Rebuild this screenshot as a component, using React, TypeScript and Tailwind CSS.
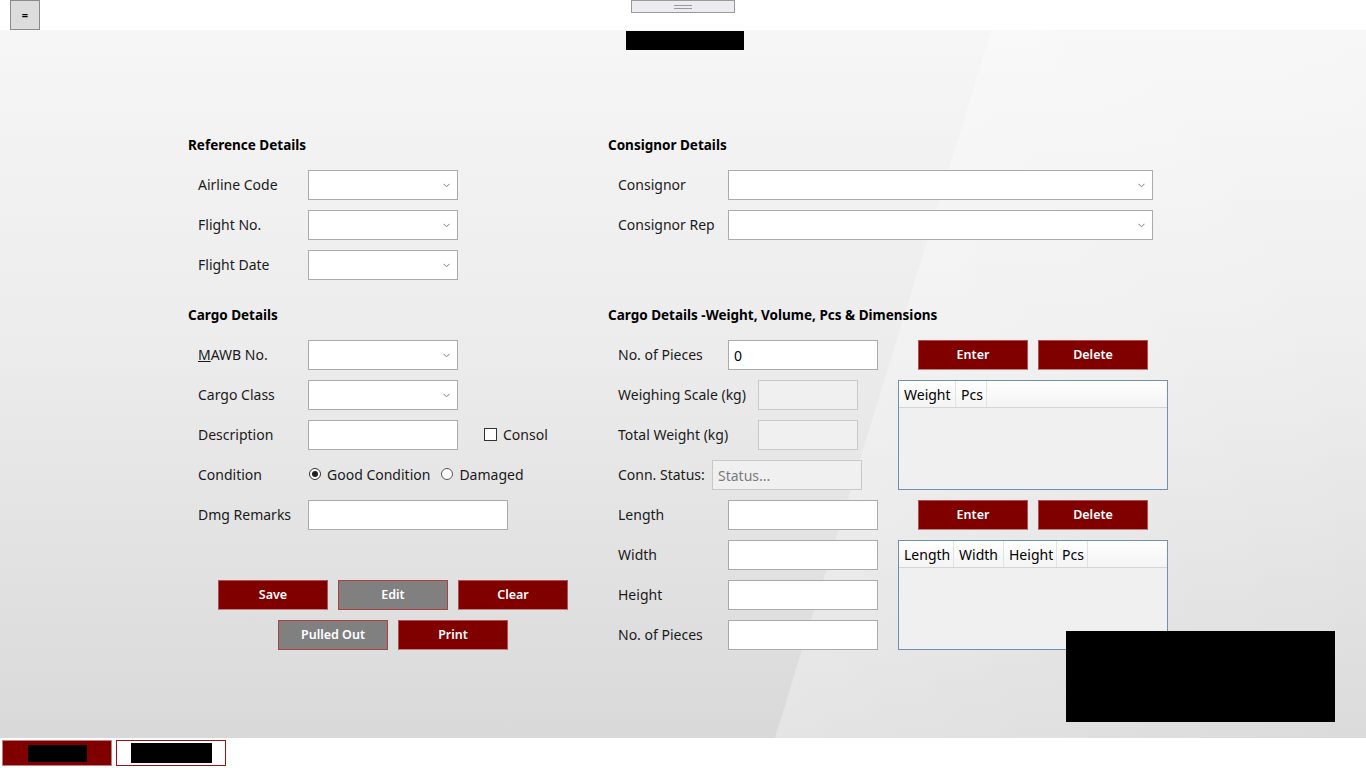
import React from "react";

const font = { fontFamily: '"Noto Sans", "Open Sans", sans-serif' };

function Chevron() {
  return (
    <svg width="7" height="5" viewBox="0 0 7 5" className="absolute right-[7px] top-[12px]">
      <path d="M0.5 0.8 L3.5 3.8 L6.5 0.8" fill="none" stroke="#7a7a7a" strokeWidth="1" />
    </svg>
  );
}

function Select({ w }: { w: string }) {
  return <div className={`relative h-[30px] ${w} bg-white border border-[#ababab]`}><Chevron /></div>;
}

function Input({ w, children, disabled }: { w: string; children?: React.ReactNode; disabled?: boolean }) {
  return (
    <div className={`h-[30px] ${w} ${disabled ? "bg-[#f0f0f0] border-[#c8c8c8]" : "bg-white border-[#ababab]"} border flex items-center px-[5px] text-[14px] text-black`}>
      {children}
    </div>
  );
}

function Row({ label, children, lw = "w-[120px]" }: { label: React.ReactNode; children: React.ReactNode; lw?: string }) {
  return (
    <div className="flex items-center h-[30px]">
      <div className={`${lw} pl-[10px] text-[14px] leading-[20px] pb-[1px] text-[#1a1a1a] shrink-0`}>{label}</div>
      {children}
    </div>
  );
}

function Heading({ children }: { children: React.ReactNode }) {
  return <div className="h-[30px] flex items-center text-[13.5px] font-bold text-black">{children}</div>;
}

function RedBtn({ children, gray }: { children: React.ReactNode; gray?: boolean }) {
  return (
    <div
      className={`w-[110px] h-[30px] flex items-center justify-center text-[12.5px] font-semibold text-white border ${
        gray ? "bg-[#808080] border-[#b04040]" : "bg-[#800000] border-[#b05050] border-b-[#c08080]"
      }`}
    >
      {children}
    </div>
  );
}

function Grid({ cols }: { cols: { n: string; w: string }[] }) {
  return (
    <div className="w-[270px] h-[110px] border border-[#7090b0] bg-[#f0f0f0] flex flex-col">
      <div className="h-[27px] flex bg-[linear-gradient(#ffffff,#f4f4f4)] border-b border-[#d5d5d5]">
        {cols.map((c) => (
          <div key={c.n} className={`${c.w} border-r border-[#e2e2e2] flex items-center pl-[5px] text-[14px] text-black`}>
            {c.n}
          </div>
        ))}
      </div>
    </div>
  );
}

export default function App() {
  return (
    <div className="w-[1366px] h-[768px] flex flex-col bg-white overflow-hidden" style={font}>
      {/* top bar */}
      <div className="h-[30px] flex items-start relative shrink-0">
        <div className="ml-[10px] w-[30px] h-[30px] bg-[#dcdcdc] border border-[#8a8a8a] flex items-center justify-center text-[11px] font-bold text-black">=</div>
        <div className="absolute left-[631px] top-0 w-[104px] h-[13px] bg-[#ececf0] border border-[#9a9a9a] flex flex-col items-center justify-center gap-[2px]">
          <div className="w-[18px] h-[1px] bg-[#999]" />
          <div className="w-[18px] h-[1px] bg-[#999]" />
        </div>
      </div>

      {/* main */}
      <div className="relative h-[708px] shrink-0 bg-[linear-gradient(180deg,#f6f6f6_0%,#ececec_45%,#d9d9d9_100%)]">
        <div className="absolute inset-0 bg-[linear-gradient(107deg,transparent_0%,transparent_62.6%,rgba(255,255,255,0.3)_62.7%,rgba(255,255,255,0.05)_100%)]" />
        <div className="absolute left-[626px] top-[1px] w-[118px] h-[19px] bg-black" />

        <div className="relative flex pl-[188px] pt-[100px]">
          {/* left column */}
          <div className="w-[420px] flex flex-col">
            <Heading>Reference Details</Heading>
            <div className="flex flex-col gap-[10px] mt-[10px]">
              <Row label="Airline Code"><Select w="w-[150px]" /></Row>
              <Row label="Flight No."><Select w="w-[150px]" /></Row>
              <Row label="Flight Date"><Select w="w-[150px]" /></Row>
            </div>
            <div className="mt-[20px]"><Heading>Cargo Details</Heading></div>
            <div className="flex flex-col gap-[10px] mt-[10px]">
              <Row label={<span><span className="underline">M</span>AWB No.</span>}><Select w="w-[150px]" /></Row>
              <Row label="Cargo Class"><Select w="w-[150px]" /></Row>
              <Row label="Description">
                <Input w="w-[150px]" />
                <div className="ml-[26px] flex items-center gap-[6px] text-[14px] text-[#1a1a1a] pb-[2px]">
                  <div className="w-[13px] h-[13px] border border-[#333] bg-white" />
                  <span>Consol</span>
                </div>
              </Row>
              <Row label="Condition">
                <div className="flex items-center text-[14px] text-[#1a1a1a] pb-[2px]">
                  <div className="ml-[1px] w-[12px] h-[12px] rounded-full border border-[#333] bg-white flex items-center justify-center">
                    <div className="w-[6px] h-[6px] rounded-full bg-[#222]" />
                  </div>
                  <span className="ml-[6px]">Good Condition</span>
                  <div className="ml-[11px] w-[12px] h-[12px] rounded-full border border-[#555] bg-white" />
                  <span className="ml-[6px]">Damaged</span>
                </div>
              </Row>
              <Row label="Dmg Remarks"><Input w="w-[200px]" /></Row>
            </div>
            <div className="flex flex-col items-start mt-[50px] gap-[10px]">
              <div className="flex gap-[10px] ml-[30px]">
                <RedBtn>Save</RedBtn>
                <RedBtn gray>Edit</RedBtn>
                <RedBtn>Clear</RedBtn>
              </div>
              <div className="flex gap-[10px] ml-[90px]">
                <RedBtn gray>Pulled Out</RedBtn>
                <RedBtn>Print</RedBtn>
              </div>
            </div>
          </div>

          {/* right column */}
          <div className="flex flex-col">
            <Heading>Consignor Details</Heading>
            <div className="flex flex-col gap-[10px] mt-[10px]">
              <Row label="Consignor"><Select w="w-[425px]" /></Row>
              <Row label="Consignor Rep"><Select w="w-[425px]" /></Row>
            </div>
            <div className="mt-[60px]"><Heading>Cargo Details -Weight, Volume, Pcs &amp; Dimensions</Heading></div>
            <div className="flex mt-[10px]">
              <div className="w-[290px] flex flex-col gap-[10px]">
                <Row label="No. of Pieces"><Input w="w-[150px]">0</Input></Row>
                <Row label="Weighing Scale (kg)" lw="w-[150px]"><Input w="w-[100px]" disabled /></Row>
                <Row label="Total Weight (kg)" lw="w-[150px]"><Input w="w-[100px]" disabled /></Row>
                <Row label="Conn. Status:" lw="w-[104px]">
                  <Input w="w-[150px]" disabled><span className="text-[#7a7a7a]">Status...</span></Input>
                </Row>
                <Row label="Length"><Input w="w-[150px]" /></Row>
                <Row label="Width"><Input w="w-[150px]" /></Row>
                <Row label="Height"><Input w="w-[150px]" /></Row>
                <Row label="No. of Pieces"><Input w="w-[150px]" /></Row>
              </div>
              <div className="flex flex-col gap-[10px]">
                <div className="flex gap-[10px] ml-[20px]">
                  <RedBtn>Enter</RedBtn>
                  <RedBtn>Delete</RedBtn>
                </div>
                <Grid cols={[{ n: "Weight", w: "w-[57px]" }, { n: "Pcs", w: "w-[31px]" }]} />
                <div className="flex gap-[10px] ml-[20px]">
                  <RedBtn>Enter</RedBtn>
                  <RedBtn>Delete</RedBtn>
                </div>
                <Grid
                  cols={[
                    { n: "Length", w: "w-[55px]" },
                    { n: "Width", w: "w-[50px]" },
                    { n: "Height", w: "w-[53px]" },
                    { n: "Pcs", w: "w-[31px]" },
                  ]}
                />
              </div>
            </div>
          </div>
        </div>
        <div className="absolute left-[1066px] top-[601px] w-[269px] h-[91px] bg-black" />
      </div>

      {/* bottom bar */}
      <div className="h-[30px] flex items-center gap-[4px] pl-[2px] shrink-0 bg-white">
        <div className="w-[110px] h-[26px] bg-[#800000] border border-[#c08080] flex items-center justify-center">
          <div className="w-[59px] h-[17px] bg-black" />
        </div>
        <div className="w-[110px] h-[26px] bg-white border border-[#a01010] flex items-center justify-center">
          <div className="w-[81px] h-[20px] bg-black" />
        </div>
      </div>
    </div>
  );
}
